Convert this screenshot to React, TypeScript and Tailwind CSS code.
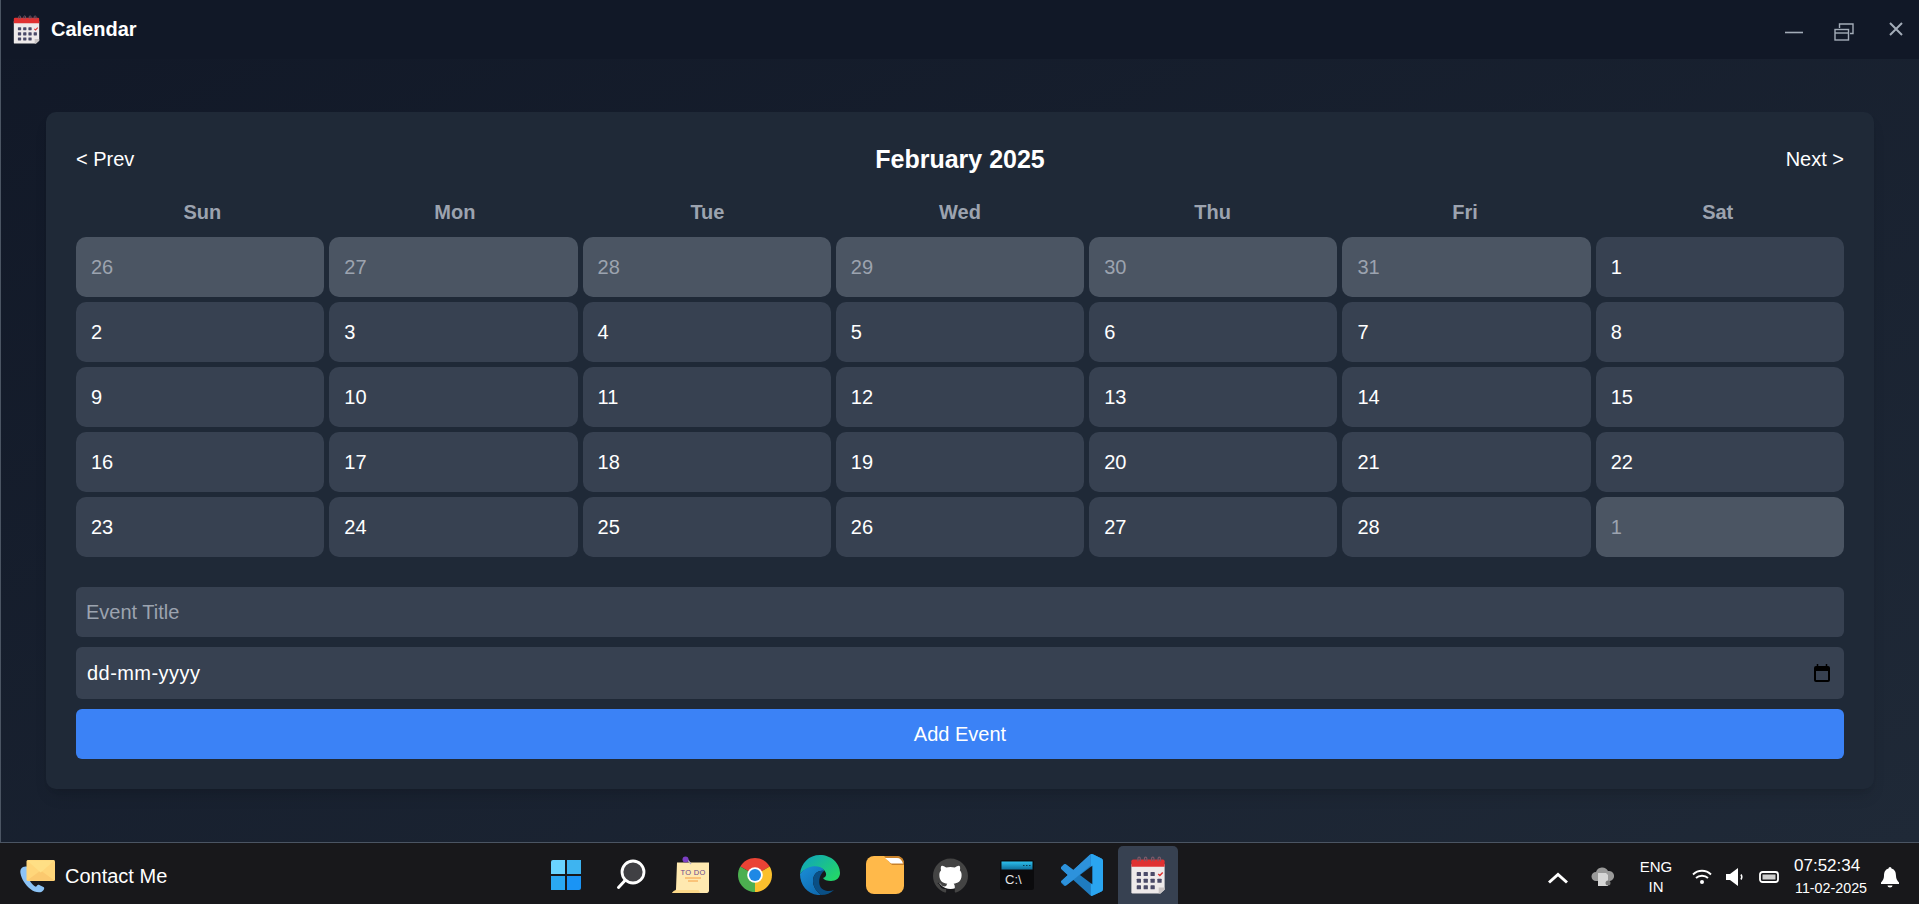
import { SiGithub } from "react-icons/si";

const days = ["Sun", "Mon", "Tue", "Wed", "Thu", "Fri", "Sat"];

const leading = [26, 27, 28, 29, 30, 31];
const current = Array.from({ length: 28 }, (_, i) => i + 1);
const trailing = [1];

function CalendarIcon({ size }: { size: number }) {
  const squares = [];
  for (let row = 0; row < 3; row++) {
    for (let col = 0; col < 4; col++) {
      if (row === 2 && col === 3) continue;
      if (row === 0 && col === 3) continue;
      squares.push(<rect key={`${row}-${col}`} x={6.5 + col * 5.8} y={13.5 + row * 5.6} width="3.6" height="3.4" rx="0.5" fill="#4a4a68" />);
    }
  }
  return (
    <svg width={size} height={size} viewBox="0 0 32 32">
      <path d="M2 7h28v21.5l-3.5 3H3a1 1 0 0 1-1-1z" fill="#eeeaea" />
      <path d="M26.5 31.5l3.5-3.5v-1.5h-5v5z" fill="#c9c4c4" />
      <path d="M2 4.5a1.5 1.5 0 0 1 1.5-1.5h25a1.5 1.5 0 0 1 1.5 1.5V9H2z" fill="#e03131" />
      {[7.5, 13, 19, 24.5].map((x) => (
        <path key={x} d={`M${x} 4.5V2a1 1 0 0 1 2 0v2.5`} fill="none" stroke="#7b5a6a" strokeWidth="1" />
      ))}
      {squares}
      <path d="M24.6 15.2l1.4 1.3 2.4-2.6" fill="none" stroke="#e03131" strokeWidth="1.2" />
    </svg>
  );
}

function ContactIcon() {
  return (
    <svg width="36" height="34" viewBox="0 0 36 34">
      <path d="M3 8c-2 1-3 3-2.600 6 1 6 5 12 10 16 3 2.500 7 3.800 10 3.200 2-.5 3.500-2 3.800-3.700.1-.7-.2-1.200-.8-1.500l-4.500-2.200c-.6-.3-1.200-.1-1.600.4l-1.300 1.500c-3-1-7.500-6.500-8.500-12l1.600-1c.5-.4.7-1 .5-1.600L8 8.600C7.500 7.400 5 7 3 8z" fill="#8cc3f5" />
      <rect x="6.500" y="1" width="28.500" height="21" rx="1.500" fill="#ffd67a" />
      <path d="M7 21.500L20.700 11.500 34.500 21.500z" fill="#fbc96f" />
      <path d="M7 1.500l13.700 12L34.500 1.500z" fill="#ffdf85" />
    </svg>
  );
}

function WindowsIcon() {
  return (
    <div className="grid grid-cols-2 gap-[2px] w-[30px] h-[30px]">
      <div className="bg-[#6ad4ff] rounded-tl-[2px]" />
      <div className="bg-[#3eb4f0]" />
      <div className="bg-[#2aa8f2]" />
      <div className="bg-[#1a94f5] rounded-br-[2px]" />
    </div>
  );
}

function SearchIcon() {
  return (
    <svg width="30" height="32" viewBox="0 0 30 32">
      <circle cx="17" cy="13" r="11" fill="#404044" stroke="#fff" strokeWidth="2.800" />
      <path d="M9 21.500L2.500 28.500" stroke="#fff" strokeWidth="3" strokeLinecap="round" />
    </svg>
  );
}

function TodoIcon() {
  return (
    <svg width="40" height="38" viewBox="0 0 40 38">
      <path d="M6 6.500h32v28c0 1.500-1 2.500-2 2.500H1c2-1 4-1.500 4-4z" fill="#ffe9b0" />
      <path d="M1 37c1-2 3-3 4.500-3H27c1 0 1.500 1.500 2 3z" fill="#fcd98a" />
      <path d="M15 2l5 6" stroke="#b8b0c4" strokeWidth="1.200" />
      <circle cx="14.500" cy="3.500" r="3" fill="#7c3fc4" />
      <text x="22" y="18.500" textAnchor="middle" fontSize="7.500" fontWeight="400" letterSpacing="0.300" fill="#6a4a8c" fontFamily="Liberation Sans, sans-serif">TO DO</text>
      <path d="M14 22h16M17 25h10" stroke="#f59e42" strokeWidth="1" />
    </svg>
  );
}

function ChromeIcon() {
  return (
    <svg width="34" height="34" viewBox="0 0 34 34">
      <path d="M17 17L2.300 8.500A17 17 0 0 1 31.700 8.500z" fill="#ea4335" />
      <path d="M17 17L31.700 8.500A17 17 0 0 1 17 34z" fill="#fbc02d" />
      <path d="M17 17L17 34A17 17 0 0 1 2.300 8.500z" fill="#4caf50" />
      <circle cx="17" cy="17" r="7.800" fill="#fff" />
      <circle cx="17" cy="17" r="6" fill="#1e88e5" />
    </svg>
  );
}

function EdgeIcon() {
  return (
    <svg width="40" height="40" viewBox="0 0 40 40">
      <defs>
        <linearGradient id="edgeTop" x1="0" y1="0" x2="1" y2="0.700">
          <stop offset="0" stopColor="#0f9fc4" />
          <stop offset="1" stopColor="#22d66a" />
        </linearGradient>
        <linearGradient id="edgeLeft" x1="0" y1="0" x2="0.700" y2="1">
          <stop offset="0" stopColor="#1a8fd8" />
          <stop offset="1" stopColor="#0f6ab0" />
        </linearGradient>
      </defs>
      <path d="M0 19C1 8 9 0 20 0c11 0 20 8 20 18 0 5-4 8-9 8-4 0-7-1-8-3 4-1 4-5 1-8-5-4-17-4-24 4z" fill="url(#edgeTop)" />
      <path d="M0 19c5-7 14-9 20-7 3 1 4 3 4 4-6-1-11 3-11 10 0 5 3 10 8 14C9 41 0 31 0 19z" fill="url(#edgeLeft)" />
      <path d="M24 16c-6-1-11 3-11 10 0 5 3 10 8 14 5 0 10-2 13-5-5 2-12 1-14-4-2-5 0-12 4-15z" fill="#0a4f85" />
    </svg>
  );
}

function FolderIcon() {
  return (
    <svg width="38" height="38" viewBox="0 0 38 38">
      <rect x="0" y="0" width="38" height="38" rx="8" fill="#ffb94a" />
      <path d="M18 0h13c4 0 7 3 7 7v2H27c-1 0-2-.5-3-2z" fill="#c8812a" />
      <path d="M19 2h12c3 0 5 2 6 5.500H26c-1 0-2-.5-3-2z" fill="#fff" />
    </svg>
  );
}

function GithubIcon() {
  return (
    <div className="relative w-[35px] h-[35px]">
      <div className="absolute inset-[4px] rounded-full bg-white" />
      <SiGithub className="absolute inset-0 text-[#444444]" size={35} />
    </div>
  );
}

function CmdIcon() {
  return (
    <svg width="34" height="30" viewBox="0 0 34 30">
      <defs>
        <linearGradient id="cmdBar" x1="0" y1="0" x2="0" y2="1">
          <stop offset="0" stopColor="#2cc0ee" />
          <stop offset="1" stopColor="#0f6f9c" />
        </linearGradient>
      </defs>
      <rect x="0" y="0" width="34" height="30" rx="2.500" fill="#0b0b0d" />
      <rect x="1.500" y="1.500" width="31" height="8" fill="url(#cmdBar)" />
      <path d="M23 5.500h1.500M26 5.500h1.500M29 5.500h1.500" stroke="#0b3a50" strokeWidth="1" />
      <text x="5" y="23.500" fontSize="13" fill="#e6e6e6" fontFamily="Liberation Sans, sans-serif">C:\</text>
    </svg>
  );
}

function VscodeIcon() {
  const logo =
    "M96.46 10.8L75.86.87a6.23 6.23 0 0 0-7.100 1.200L29.350 38.040 12.180 25a4.160 4.160 0 0 0-5.320.240l-5.500 5a4.170 4.170 0 0 0 0 6.160L16.250 50 1.360 63.580a4.170 4.170 0 0 0 0 6.160l5.500 5a4.160 4.160 0 0 0 5.320.240l17.170-13.040 39.400 35.960a6.220 6.220 0 0 0 7.100 1.200l20.600-9.910A6.250 6.250 0 0 0 100 83.560V16.420a6.250 6.250 0 0 0-3.540-5.630zM75.010 72.700 45.110 50l29.900-22.700z";
  return (
    <svg width="42" height="42" viewBox="0 0 100 100">
      <defs>
        <clipPath id="vsRight">
          <rect x="71" y="0" width="29" height="100" />
        </clipPath>
        <clipPath id="vsUpper">
          <path d="M0 0h71v27L12 76 0 66z" />
        </clipPath>
      </defs>
      <path d={logo} fill="#1f7cc0" />
      <path d={logo} fill="#2d92dc" clipPath="url(#vsUpper)" />
      <path d={logo} fill="#2aa5f0" clipPath="url(#vsRight)" />
    </svg>
  );
}

function TaskIcon({ active, className, children }: { active?: boolean; className?: string; children: React.ReactNode }) {
  return (
    <div className={`w-[60px] h-[58px] rounded-t-[5px] flex items-center justify-center ${active ? "bg-[#374151]" : ""} ${className ?? ""}`}>
      {children}
    </div>
  );
}

export default function App() {
  return (
    <div className="h-screen w-full flex flex-col overflow-hidden font-['Liberation_Sans',Arial,sans-serif] text-white">
      <div className="flex-1 flex flex-col min-h-0 border-l border-b border-[#4b5563] bg-gradient-to-br from-[#111827] to-[#1f2937]">
        {/* Title bar */}
        <div className="h-[59px] shrink-0 bg-[#111827] flex items-center pl-[11px]">
          <CalendarIcon size={29} />
          <span className="ml-[10px] mb-[2px] text-[20px] font-bold">Calendar</span>
          <div className="ml-auto flex items-center text-[#9ca3af]">
            <svg width="18" height="18" viewBox="0 0 18 18" className="mr-[31px] mt-[3px]">
              <path d="M0 10.500h18" stroke="#a3acb8" strokeWidth="1.600" />
            </svg>
            <svg width="20" height="18" viewBox="0 0 20 18" className="mr-[35px] mt-[5px]">
              <path d="M5.500 5V1h13.500v9.500h-3" fill="none" stroke="#a3acb8" strokeWidth="1.400" />
              <rect x="1" y="6.500" width="13.500" height="10.500" fill="none" stroke="#a3acb8" strokeWidth="1.400" />
              <path d="M1 10h13.500" stroke="#a3acb8" strokeWidth="1.400" />
            </svg>
            <svg width="14" height="14" viewBox="0 0 14 14" className="mr-[16px] mb-[2px]">
              <path d="M1 1l12 12M13 1L1 13" stroke="#a3acb8" strokeWidth="2" />
            </svg>
          </div>
        </div>

        {/* Calendar card */}
        <div className="flex-1 pt-[53px] pl-[45px] pr-[45px]">
          <div className="bg-[#1f2937] rounded-[10px] p-[30px] shadow-lg">
            <div className="h-[34px] flex items-center justify-between mb-[23px]">
              <button className="text-[20px]">&lt; Prev</button>
              <h2 className="text-[25px] font-bold mt-[1px]">February 2025</h2>
              <button className="text-[20px]">Next &gt;</button>
            </div>

            <div className="grid grid-cols-7 gap-[5px] px-[2.5px] mb-[13px]">
              {days.map((d) => (
                <div key={d} className="h-[25px] flex items-center justify-center text-[20px] font-bold text-[#9ca3af]">
                  {d}
                </div>
              ))}
            </div>

            <div className="grid grid-cols-7 gap-[5px]">
              {leading.map((n) => (
                <div key={`p${n}`} className="h-[60px] flex items-center px-[15px] rounded-[10px] bg-[#4b5563] text-[#9ca3af] text-[20px]">{n}</div>
              ))}
              {current.map((n) => (
                <div key={n} className="h-[60px] flex items-center px-[15px] rounded-[10px] bg-[#374151] text-[20px]">{n}</div>
              ))}
              {trailing.map((n) => (
                <div key={`n${n}`} className="h-[60px] flex items-center px-[15px] rounded-[10px] bg-[#4b5563] text-[#9ca3af] text-[20px]">{n}</div>
              ))}
            </div>

            <div className="mt-[30px] flex flex-col gap-[10px]">
              <input
                placeholder="Event Title"
                className="h-[50px] w-full rounded-[6px] bg-[#374151] px-[10px] text-[20px] outline-none placeholder:text-[#9ca3af]"
              />
              <div className="h-[52px] w-full rounded-[6px] bg-[#374151] pl-[11px] pr-[10px] flex items-center justify-between text-[20px] tracking-[0.45px]">
                <span>dd-mm-yyyy</span>
                <svg width="16" height="18" viewBox="0 0 16 18" className="mr-[4px]">
                  <rect x="1" y="3" width="14" height="14" rx="1" fill="none" stroke="#000" strokeWidth="2" />
                  <path d="M1 5.500h14" stroke="#000" strokeWidth="3" />
                  <path d="M3.500 0v3M12.500 0v3" stroke="#000" strokeWidth="1.500" />
                </svg>
              </div>
              <button className="h-[50px] w-full rounded-[6px] bg-[#3b82f6] text-[20px]">Add Event</button>
            </div>
          </div>
        </div>
      </div>

      {/* Taskbar */}
      <div className="h-[61px] shrink-0 bg-[#18181b] flex items-end">
        <div className="w-[536px] h-full flex items-center pl-[20px] pt-[5px] shrink-0">
          <ContactIcon />
          <span className="ml-[9px] text-[20px]">Contact Me</span>
        </div>
        <div className="flex">
          <TaskIcon><WindowsIcon /></TaskIcon>
          <TaskIcon className="ml-[5px]"><SearchIcon /></TaskIcon>
          <TaskIcon><TodoIcon /></TaskIcon>
          <TaskIcon className="ml-[4px]"><ChromeIcon /></TaskIcon>
          <TaskIcon className="ml-[5px]"><EdgeIcon /></TaskIcon>
          <TaskIcon className="ml-[5px]"><FolderIcon /></TaskIcon>
          <TaskIcon className="ml-[5px]"><GithubIcon /></TaskIcon>
          <TaskIcon className="ml-[7px]"><CmdIcon /></TaskIcon>
          <TaskIcon className="ml-[5px]"><VscodeIcon /></TaskIcon>
          <TaskIcon active className="ml-[6px]"><CalendarIcon size={38} /></TaskIcon>
        </div>
        <div className="ml-auto h-full flex items-center pr-[19px] pt-[6px]">
          <svg width="20" height="12" viewBox="0 0 20 12" className="mt-[2px]">
            <path d="M1 10.500L10 2.500l9 8" fill="none" stroke="#fff" strokeWidth="3" />
          </svg>
          <svg width="24" height="22" viewBox="0 0 24 22" className="ml-[23px]">
            <path d="M5 15a4.500 4.500 0 0 1 0-9 6.500 6.500 0 0 1 12-1 5 5 0 0 1 2 10z" fill="#9a9a9a" />
            <path d="M7 7h8l2 2v11H7z" fill="#d6d6d6" />
            <circle cx="17" cy="17" r="2.500" fill="#777" />
          </svg>
          <div className="ml-[24px] w-[34px] flex flex-col items-center text-[15px] leading-[20px]">
            <span>ENG</span>
            <span>IN</span>
          </div>
          <svg width="20" height="16" viewBox="0 0 20 16" className="ml-[19px]">
            <path d="M1 5.500c5-5 13-5 18 0M4 9c3-3 9-3 12 0" fill="none" stroke="#fff" strokeWidth="1.800" />
            <circle cx="10" cy="13" r="2" fill="#fff" />
          </svg>
          <svg width="19" height="18" viewBox="0 0 19 18" className="ml-[14px]">
            <path d="M0 6h4l8-6v18l-8-6H0z" fill="#fff" />
            <path d="M15 6.500c1 1.500 1 3.500 0 5" fill="none" stroke="#fff" strokeWidth="1.500" />
          </svg>
          <svg width="20" height="12" viewBox="0 0 20 12" className="ml-[14px]">
            <rect x="1" y="1" width="18" height="10" rx="2.500" fill="none" stroke="#fff" strokeWidth="1.800" />
            <rect x="3.500" y="3.500" width="13" height="5" fill="#d0d0d0" />
          </svg>
          <div className="ml-[15px] w-[76px] flex flex-col items-start whitespace-nowrap">
            <span className="text-[17px] leading-[22px]">07:52:34</span>
            <span className="text-[14.300px] leading-[20px] mt-[1px] ml-[1px]">11-02-2025</span>
          </div>
          <svg width="20" height="22" viewBox="0 0 20 22" className="ml-[10px]">
            <path d="M10 1a1.500 1.500 0 0 1 1.500 1.500C15 3.500 16 6.500 16 10c0 3 1.500 5 3 6.500V18H1v-1.500C2.500 15 4 13 4 10c0-3.500 1-6.500 4.500-7.500A1.500 1.500 0 0 1 10 1z" fill="#fff" />
            <path d="M7.500 19.500a2.500 2 0 0 0 5 0z" fill="#fff" />
          </svg>
        </div>
      </div>
    </div>
  );
}
